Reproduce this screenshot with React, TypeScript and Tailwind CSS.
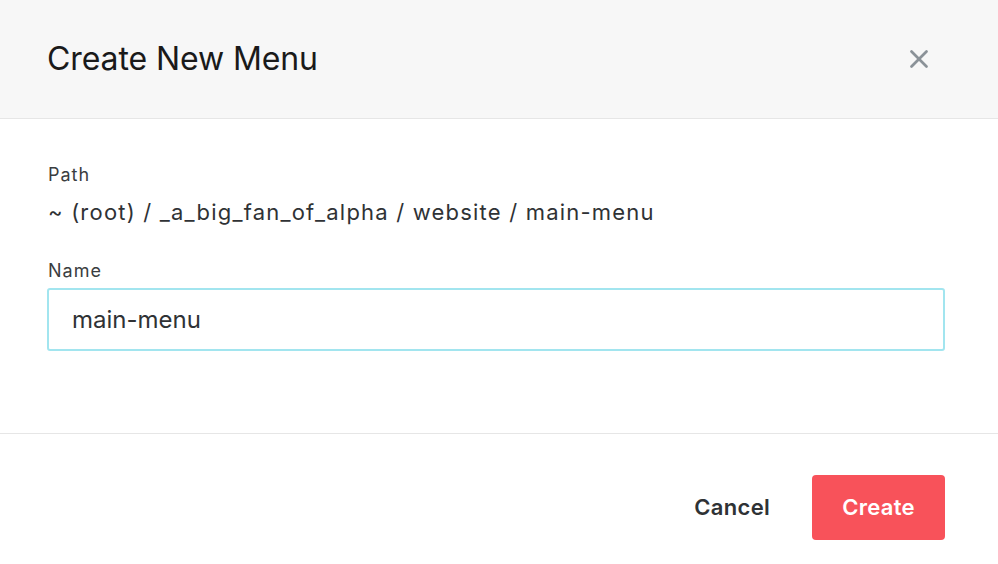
import { X } from "lucide-react";

export default function App() {
  return (
    <div
      className="flex h-[564px] w-[998px] flex-col bg-white text-[#2f3235]"
      style={{ fontFamily: "Inter, 'Noto Sans', sans-serif" }}
    >
      <div className="flex h-[119px] shrink-0 items-center justify-between border-b border-[#e6e6e6] bg-[#f7f7f7] pl-[47px] pr-[64px]">
        <h1 className="text-[32px] font-normal tracking-[-0.1px] text-[#1a1a1a]">Create New Menu</h1>
        <button className="text-[#8b9298]">
          <X size={30} strokeWidth={2.2} />
        </button>
      </div>

      <div className="flex h-[315px] shrink-0 flex-col border-b border-[#e6e6e6] pl-[47px] pr-[53px] pt-[44px]">
        <div className="pl-px text-[18px] leading-[24px] tracking-[1px] text-[#3a3d40]">Path</div>
        <div className="mt-[11px] pl-px text-[22px] leading-[28px] tracking-[1.2px] text-[#2f3235]">
          ~ (root) / _a_big_fan_of_alpha / website / main-menu
        </div>
        <div className="mt-[33px] pl-px text-[18px] leading-[24px] tracking-[1px] text-[#3a3d40]">Name</div>
        <input
          defaultValue="main-menu"
          className="mt-[5px] h-[63px] w-full rounded-[3px] border-2 border-[#a2e5ef] px-[23px] text-[24px] text-[#2f3235] outline-none"
        />
      </div>

      <div className="flex flex-1 items-start justify-end gap-[42px] pr-[53px] pt-[41px]">
        <button className="mt-[16px] text-[22px] font-semibold tracking-[0.3px] text-[#2f3235]">Cancel</button>
        <button className="h-[65px] w-[133px] rounded-[4px] bg-[#f8525a] text-[22px] font-semibold tracking-[0.3px] text-white">
          Create
        </button>
      </div>
    </div>
  );
}
